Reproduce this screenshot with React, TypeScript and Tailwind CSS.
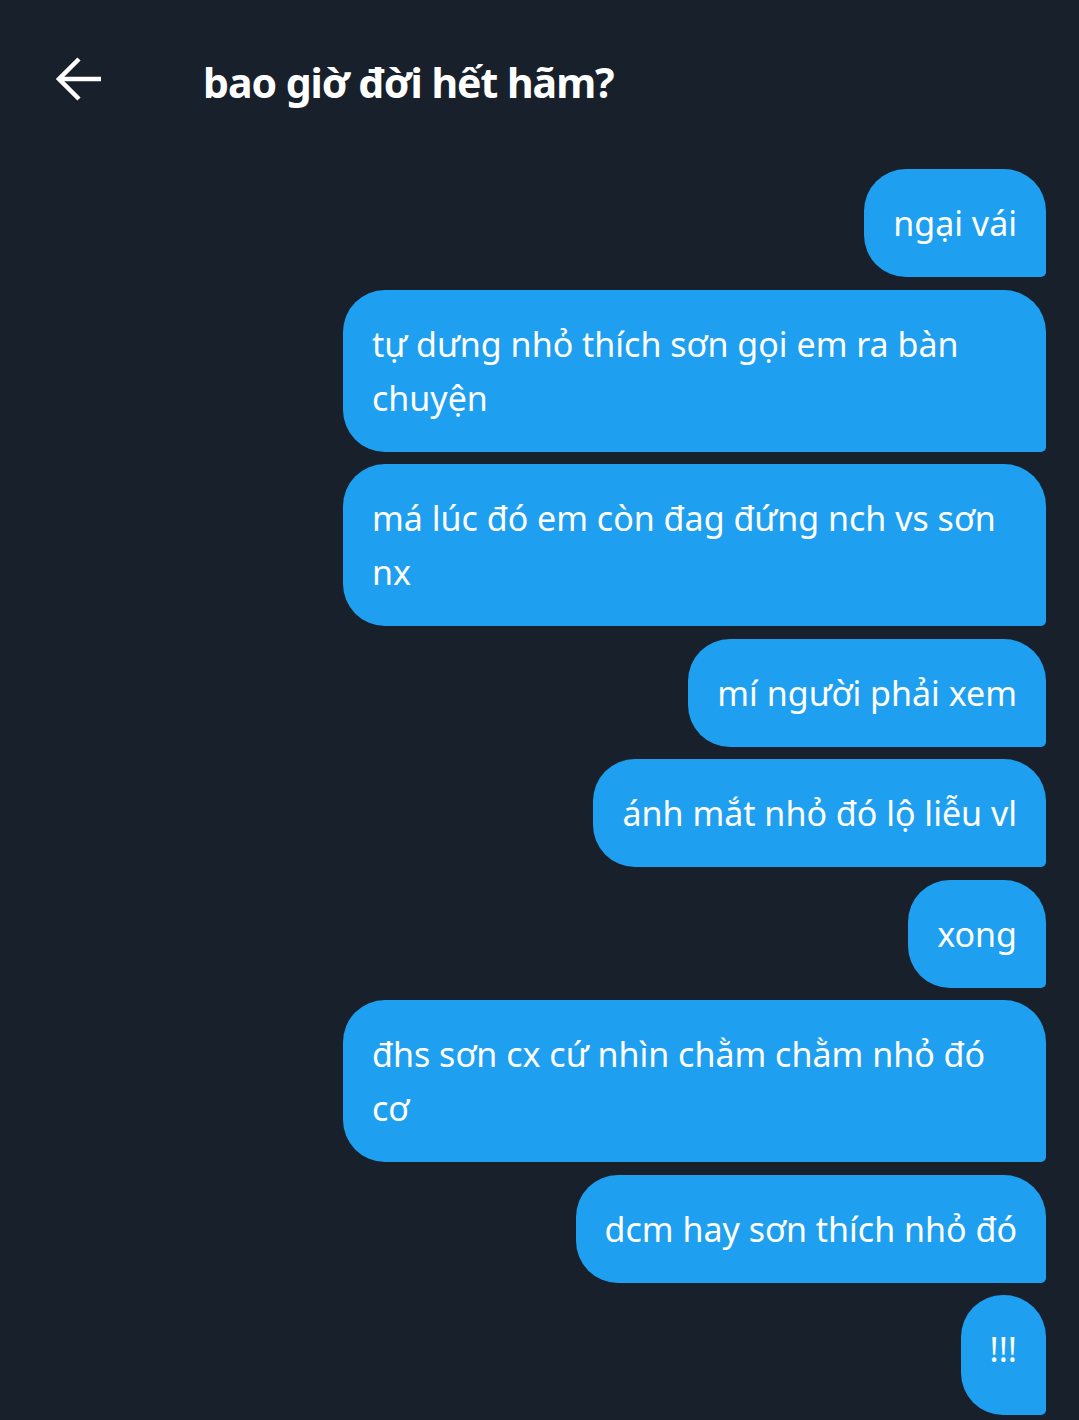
import React from "react";

const messages: { text: string; tall?: boolean }[] = [
	{text: "ngại vái"},
	{text: "tự dưng nhỏ thích sơn gọi em ra bàn chuyện"},
	{text: "má lúc đó em còn đag đứng nch vs sơn nx"},
	{text: "mí người phải xem"},
	{text: "ánh mắt nhỏ đó lộ liễu vl"},
	{text: "xong"},
	{text: "đhs sơn cx cứ nhìn chằm chằm nhỏ đó cơ"},
	{text: "dcm hay sơn thích nhỏ đó"},
	{text: "!!!", tall: true},
];

function BackArrow() {
	return (
		<svg width="46" height="46" viewBox="0 0 46 46" fill="none" stroke="white" strokeWidth="4.5" strokeLinecap="butt" strokeLinejoin="miter">
			<path d="M45 23H4"/>
			<path d="M23 3L3 23L23 43"/>
		</svg>
	);
}

function Bubble({text, tall}: { text: string; tall?: boolean }) {
	return (
		<div className={`max-w-[703px] bg-[#1f9ff0] text-white rounded-[42px] rounded-br-[5px] px-[29px] pt-[27px] ${tall ? "pb-[39px]" : "pb-[27px]"} text-[34px] leading-[54px]`}>
			{text}
		</div>
	);
}

export default function App() {
	return (
		<div className="w-[1079px] h-[1420px] overflow-hidden bg-[#17202b]" style={{fontFamily: "'Noto Sans', 'DejaVu Sans', sans-serif"}}>

			{/* Header */}
			<div className="flex items-center h-[160px] pl-[56px] -mt-[1px]">
				<BackArrow/>
				<h1 className="ml-[101px] mt-[6px] text-white text-[41px] font-bold tracking-tight leading-none">
					bao giờ đời hết hãm?
				</h1>
			</div>

			{/* Messages */}
			<div className="flex flex-col items-end gap-[12.5px] pr-[33px] pt-[10px]">
				{messages.map((m, i) => (
					<Bubble key={i} text={m.text} tall={m.tall}/>
				))}
			</div>
		</div>
	);
}
